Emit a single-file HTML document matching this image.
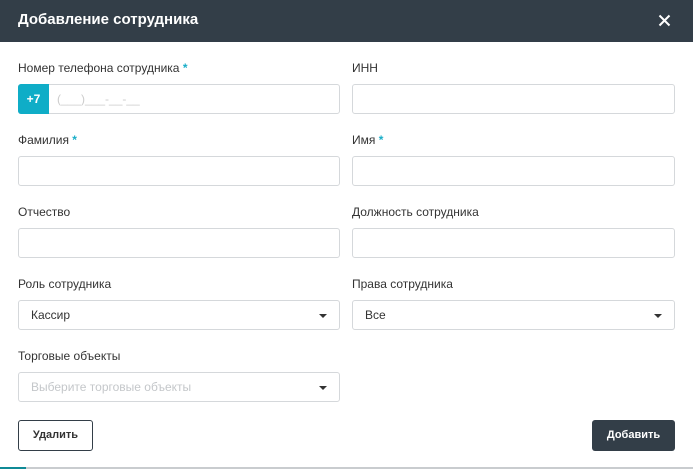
<!DOCTYPE html>
<html><head><meta charset="utf-8"><style>
*{box-sizing:border-box;margin:0;padding:0}
body{width:693px;height:469px;background:#fff;font-family:"Liberation Sans",sans-serif;position:relative;overflow:hidden;color:#333}
.hdr{position:absolute;left:0;top:0;width:693px;height:42px;background:#333e48;color:#fff;font-weight:bold;font-size:15px;line-height:40px;padding-left:18px}
.x{position:absolute;left:658px;top:14px;width:13px;height:13px}
.lbl{position:absolute;font-size:12px;color:#333}
.lbl b{color:#1aaec8;font-weight:bold}
.inp{position:absolute;height:30px;border:1px solid #d5d8db;border-radius:3px;background:#fff;font-size:12px;line-height:28px;padding-left:12px;color:#333}
.c1{left:18px;width:322px}.c2{left:352px;width:323px}
.arr{position:absolute;right:12px;top:13px;width:0;height:0;border-left:4px solid transparent;border-right:4px solid transparent;border-top:4px solid #333}
.btn{position:absolute;top:420px;height:31px;border-radius:3px;font-size:11px;font-weight:bold;line-height:29px;text-align:center}
</style></head><body>
<div class="hdr">Добавление сотрудника</div>
<svg class="x" viewBox="0 0 13 13"><path d="M1.5 1.5L11.5 11.5M11.5 1.5L1.5 11.5" stroke="#fff" stroke-width="2"/></svg>

<div class="lbl" style="left:18px;top:61px">Номер телефона сотрудника <b>*</b></div>
<div class="inp c1" style="top:84px;padding-left:0">
<div style="position:absolute;left:-1px;top:-1px;width:31px;height:30px;background:#0fadc7;border-radius:3px 0 0 3px;color:#fff;font-weight:bold;text-align:center;line-height:30px;font-size:12px">+7</div>
<span style="position:absolute;left:38px;color:#ccc">(___)___-__-__</span></div>
<div class="lbl" style="left:352px;top:61px">ИНН</div>
<div class="inp c2" style="top:84px"></div>

<div class="lbl" style="left:18px;top:133px">Фамилия <b>*</b></div>
<div class="inp c1" style="top:156px"></div>
<div class="lbl" style="left:352px;top:133px">Имя <b>*</b></div>
<div class="inp c2" style="top:156px"></div>

<div class="lbl" style="left:18px;top:205px">Отчество</div>
<div class="inp c1" style="top:228px"></div>
<div class="lbl" style="left:352px;top:205px">Должность сотрудника</div>
<div class="inp c2" style="top:228px"></div>

<div class="lbl" style="left:18px;top:277px">Роль сотрудника</div>
<div class="inp c1" style="top:300px">Кассир<div class="arr"></div></div>
<div class="lbl" style="left:352px;top:277px">Права сотрудника</div>
<div class="inp c2" style="top:300px">Все<div class="arr"></div></div>

<div class="lbl" style="left:18px;top:349px">Торговые объекты</div>
<div class="inp c1" style="top:372px;color:#c4c7ca">Выберите торговые объекты<div class="arr"></div></div>

<div class="btn" style="left:18px;width:75px;border:1px solid #333e48;color:#333">Удалить</div>
<div class="btn" style="left:592px;width:83px;background:#333e48;color:#fff;line-height:31px">Добавить</div>
<div style="position:absolute;left:0;top:467px;width:693px;height:2px;background:#c9cccf"></div>
<div style="position:absolute;left:0;top:467px;width:26px;height:2px;background:#0f8a96"></div>
</body></html>
